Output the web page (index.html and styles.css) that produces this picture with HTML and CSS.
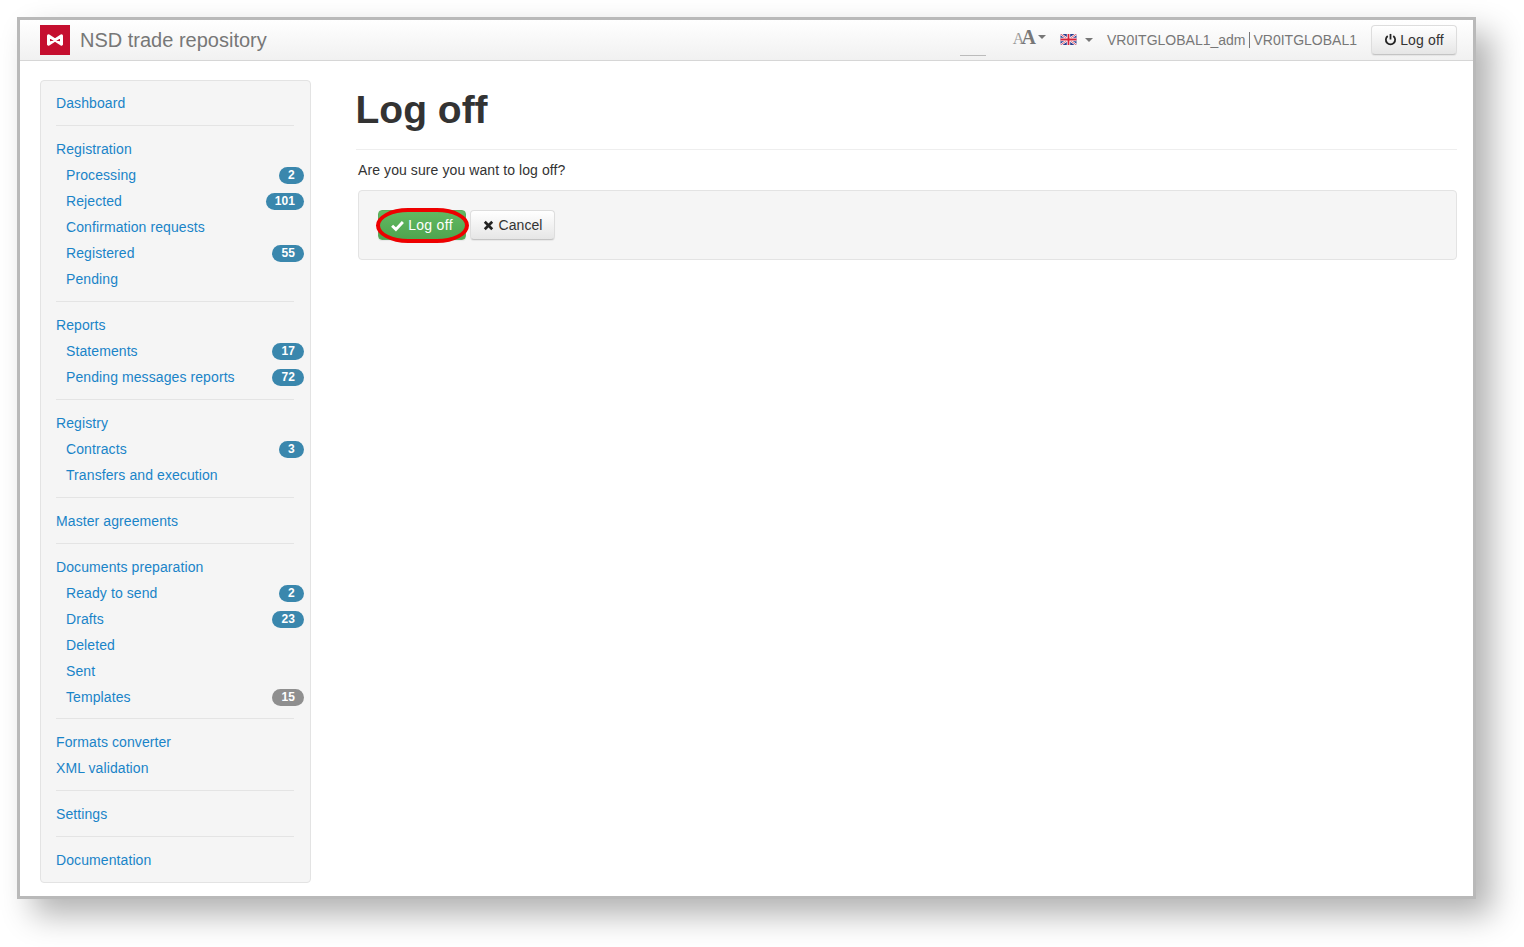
FILE: index.html
```html
<!DOCTYPE html>
<html lang="en">
<head>
  <meta charset="UTF-8" />
  <title>NSD trade repository – Log off</title>
  <link rel="stylesheet" href="styles.css">
</head>
<body>
  <div class="frame">
    <div class="navbar">
      <svg class="logo" viewBox="0 0 30 30"><rect width="30" height="30" fill="#c50f2f"/><path d="M8.5 10.8 L21.5 19.2 V10.8 L8.5 19.2 Z" fill="none" stroke="#fff" stroke-width="3" stroke-linejoin="round"/></svg>
      <a class="brand">NSD trade repository</a>
      <div class="nav-right">
        <span class="nav-stub"></span>
        <span class="font-size"><span class="a-small">A</span><span class="a-big">A</span><i class="caret"></i></span>
        <span class="lang">
          <svg class="flag" viewBox="0 0 16 11"><rect width="16" height="11" fill="#2b3f8f"/><path d="M0 0 L16 11 M16 0 L0 11" stroke="#fff" stroke-width="2.2"/><path d="M0 0 L16 11 M16 0 L0 11" stroke="#d8324a" stroke-width=".8"/><path d="M8 0 V11 M0 5.5 H16" stroke="#fff" stroke-width="3.4"/><path d="M8 0 V11 M0 5.5 H16" stroke="#d8243c" stroke-width="1.8"/></svg>
          <i class="caret"></i>
        </span>
        <span class="user"><span>VR0ITGLOBAL1_adm</span><span class="user-org">VR0ITGLOBAL1</span></span>
        <a class="btn btn-nav">
          <svg class="icon" viewBox="0 0 14 14"><path d="M4 3.2 A5 5 0 1 0 10 3.2" fill="none" stroke="#222" stroke-width="1.9"/><path d="M7 1 V7" stroke="#222" stroke-width="1.9"/></svg>
          Log off
        </a>
      </div>
    </div>

    <div class="main">
      <div class="sidebar">
        <ul class="nav-list">
          <li><a>Dashboard</a></li>
        </ul>
        <hr>
        <ul class="nav-list">
          <li><a>Registration</a></li>
          <li class="sub"><a>Processing</a><span class="badge">2</span></li>
          <li class="sub"><a>Rejected</a><span class="badge">101</span></li>
          <li class="sub"><a>Confirmation requests</a></li>
          <li class="sub"><a>Registered</a><span class="badge">55</span></li>
          <li class="sub"><a>Pending</a></li>
        </ul>
        <hr>
        <ul class="nav-list">
          <li><a>Reports</a></li>
          <li class="sub"><a>Statements</a><span class="badge">17</span></li>
          <li class="sub"><a>Pending messages reports</a><span class="badge">72</span></li>
        </ul>
        <hr>
        <ul class="nav-list">
          <li><a>Registry</a></li>
          <li class="sub"><a>Contracts</a><span class="badge">3</span></li>
          <li class="sub"><a>Transfers and execution</a></li>
        </ul>
        <hr>
        <ul class="nav-list">
          <li><a>Master agreements</a></li>
        </ul>
        <hr>
        <ul class="nav-list">
          <li><a>Documents preparation</a></li>
          <li class="sub"><a>Ready to send</a><span class="badge">2</span></li>
          <li class="sub"><a>Drafts</a><span class="badge">23</span></li>
          <li class="sub"><a>Deleted</a></li>
          <li class="sub"><a>Sent</a></li>
          <li class="sub"><a>Templates</a><span class="badge badge-grey">15</span></li>
        </ul>
        <hr class="hr-tight">
        <ul class="nav-list">
          <li><a>Formats converter</a></li>
          <li><a>XML validation</a></li>
        </ul>
        <hr>
        <ul class="nav-list">
          <li><a>Settings</a></li>
        </ul>
        <hr>
        <ul class="nav-list">
          <li><a>Documentation</a></li>
        </ul>
      </div>

      <div class="content">
        <h1>Log off</h1>
        <p>Are you sure you want to log off?</p>
        <div class="well">
          <a class="btn btn-success">
            <svg class="icon" viewBox="0 0 14 14"><path d="M1.2 7.2 L5.3 11.2 L12.8 3.2" fill="none" stroke="#fff" stroke-width="3.1"/></svg>
            Log off
            <span class="highlight"></span>
          </a>
          <a class="btn btn-cancel">
            <svg class="icon" viewBox="0 0 14 14"><path d="M3 3 L11 11 M11 3 L3 11" fill="none" stroke="#222" stroke-width="2.9"/></svg>
            Cancel
          </a>
        </div>
      </div>
    </div>
  </div>
</body>
</html>
```

FILE: styles.css
```css
* {
  box-sizing: border-box;
}

html, body {
  height: 100%;
}

body {
  margin: 0;
  padding: 17px 0 0 17px;
  background: #fff;
  font-family: "Liberation Sans", Arial, sans-serif;
  font-size: 14px;
  letter-spacing: 0.09px;
  color: #333;
  overflow: hidden;
}

.frame {
  width: 1459px;
  height: 882px;
  border: 3px solid #b9b9b9;
  background: #fff;
  box-shadow: 16px 16px 30px rgba(0, 0, 0, 0.3);
}

/* top bar */
.navbar {
  display: flex;
  align-items: center;
  height: 41px;
  padding: 0 16px 1px 20px;
  background: linear-gradient(#ffffff, #f1f1f1);
  border-bottom: 1px solid #d6d6d6;
}

.logo {
  width: 30px;
  height: 30px;
}

.brand {
  margin: 2px 0 0 10px;
  font-size: 20px;
  letter-spacing: 0;
  color: #777;
}

.nav-right {
  display: flex;
  align-items: center;
  margin-left: auto;
  height: 100%;
}

.nav-stub {
  align-self: flex-end;
  width: 26px;
  height: 1px;
  margin: 0 27px 3px 0;
  background: #bbb;
}

.font-size {
  display: flex;
  align-items: baseline;
  margin: -5px 14px 0 0;
  font-family: "Liberation Serif", serif;
  font-weight: bold;
  color: #777;
}

.a-small {
  font-size: 16px;
  font-weight: normal;
  color: #999;
}

.a-big {
  font-size: 20px;
  margin-left: -3px;
}

.caret {
  display: inline-block;
  width: 0;
  height: 0;
  margin-left: 2px;
  border-top: 4px solid #777;
  border-left: 4.5px solid transparent;
  border-right: 4.5px solid transparent;
  vertical-align: middle;
}

.font-size .caret {
  align-self: center;
  margin-top: -1px;
}

.lang {
  display: flex;
  align-items: center;
  margin-right: 14px;
}

.lang .caret {
  margin-left: 8px;
}

.flag {
  width: 17px;
  height: 11px;
}

.user {
  display: flex;
  align-items: center;
  margin-right: 14px;
  letter-spacing: 0;
  color: #777;
}

.user-org {
  margin-left: 3px;
  padding-left: 4px;
  border-left: 1px solid #777;
}

/* buttons */
.btn {
  position: relative;
  display: inline-flex;
  align-items: center;
  justify-content: center;
  height: 30px;
  padding: 0 10px;
  white-space: nowrap;
  color: #333;
  background: linear-gradient(#ffffff, #e6e6e6);
  border: 1px solid #ddd;
  border-bottom-color: #c4c4c4;
  border-radius: 4px;
  box-shadow: 0 1px 1px rgba(0, 0, 0, 0.06);
}

.icon {
  width: 13px;
  height: 13px;
  margin-right: 3px;
}

.btn-nav {
  width: 86px;
  letter-spacing: 0.15px;
}

.btn-success {
  width: 88px;
  letter-spacing: 0.3px;
  color: #fff;
  background: linear-gradient(#62b962, #4fa54f);
  border-color: #5cad5c;
}

.btn-success .icon {
  margin-right: 4px;
}

.btn-cancel {
  width: 85px;
}

/* the red ring drawn on top of the screenshot */
.highlight {
  position: absolute;
  left: -3px;
  top: -3px;
  width: 93px;
  height: 35px;
  border: 4px solid #ee0000;
  border-radius: 32px / 17.5px;
}

/* layout */
.main {
  display: flex;
  padding: 19px 16px 0 20px;
}

.sidebar {
  width: 271px;
  height: 803px;
  flex-shrink: 0;
  padding: 9px 16px 0 15px;
  background: #f5f5f5;
  border: 1px solid #e3e3e3;
  border-radius: 4px;
}

.nav-list {
  margin: 0;
  padding: 0;
  list-style: none;
}

.nav-list li {
  display: flex;
  align-items: center;
  justify-content: space-between;
  height: 26px;
  margin-right: -10px;
  color: #1a84c8;
}

.nav-list .sub {
  padding-left: 10px;
}

.sidebar hr {
  height: 1px;
  margin: 9px 0 10px;
  border: 0;
  background: #e4e4e4;
}

.sidebar .hr-tight {
  margin: 8px 0 10px;
}

.badge {
  min-width: 25px;
  height: 17px;
  padding: 0 9px;
  border-radius: 9px;
  background: #3a87ad;
  color: #fff;
  font-size: 12px;
  font-weight: bold;
  line-height: 17px;
  text-align: center;
}

.badge-grey {
  background: #8f8f8f;
}

.content {
  flex: 1;
  margin-left: 45px;
}

h1 {
  margin: 0;
  padding: 10px 0 18px;
  height: 70px;
  border-bottom: 1px solid #eee;
  font-size: 39px;
  line-height: 40px;
  font-weight: bold;
  letter-spacing: 0;
  text-indent: -0.5px;
  color: #333;
}

p {
  margin: 0 0 0 2px;
  height: 40px;
  line-height: 20px;
  padding-top: 10px;
}

.well {
  display: flex;
  gap: 4px;
  height: 70px;
  margin-left: 2px;
  padding: 19px;
  background: #f5f5f5;
  border: 1px solid #e3e3e3;
  border-radius: 4px;
}
```
